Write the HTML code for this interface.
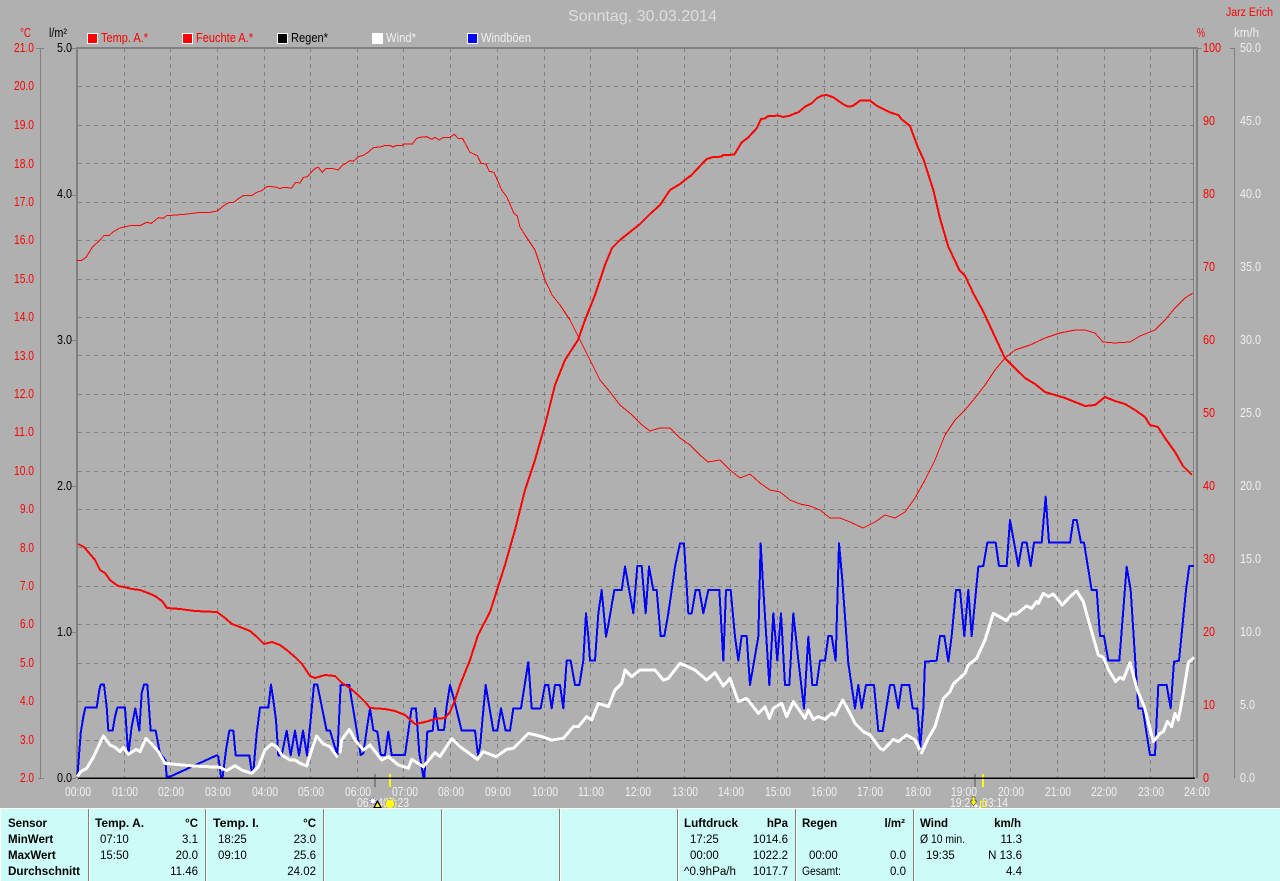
<!DOCTYPE html>
<html><head><meta charset="utf-8"><title>Sonntag, 30.03.2014</title>
<style>
html,body{margin:0;padding:0;background:#b0b0b0;width:1280px;height:881px;overflow:hidden}
svg{display:block;font-family:"Liberation Sans",sans-serif;font-size:12.5px}
.r{fill:#f00}.k{fill:#000}.w{fill:#f0f0f0}
.b{font-weight:bold;fill:#000;font-size:11.5px}.t{fill:#000;font-size:11.5px}
.e{text-anchor:end}.m{text-anchor:middle}
.l{fill:none;stroke-linejoin:round;vector-effect:non-scaling-stroke;shape-rendering:crispEdges}
.red{stroke:#f00;stroke-width:2}.hum{stroke:#f00;stroke-width:1}.blue{stroke:#00f;stroke-width:2}.white{stroke:#fff;stroke-width:3}
.g{stroke:#808080;stroke-width:1;stroke-dasharray:4 4;shape-rendering:crispEdges;fill:none}
.s{stroke:#808080;shape-rendering:crispEdges;fill:none}
</style></head><body>
<svg width="1280" height="881" viewBox="0 0 1280 881" xmlns="http://www.w3.org/2000/svg">
<rect width="1280" height="881" fill="#b0b0b0"/>
<text x="568" y="21" font-size="16" fill="#dedede" textLength="149" lengthAdjust="spacingAndGlyphs">Sonntag, 30.03.2014</text>
<text x="1226" y="16" class="r" font-size="11.5" textLength="47" lengthAdjust="spacingAndGlyphs">Jarz Erich</text>
<text x="20" y="37" class="r" textLength="11" lengthAdjust="spacingAndGlyphs">°C</text>
<text x="49" y="37" class="k" textLength="18" lengthAdjust="spacingAndGlyphs">l/m²</text>
<text x="1197" y="37" class="r" textLength="8" lengthAdjust="spacingAndGlyphs">%</text>
<text x="1234" y="37" class="w" textLength="25" lengthAdjust="spacingAndGlyphs">km/h</text>

<rect x="87.5" y="33.5" width="10" height="10" fill="#f00" stroke="#fff" shape-rendering="crispEdges"/>
<text x="101" y="42" class="r" textLength="47" lengthAdjust="spacingAndGlyphs">Temp. A.*</text>
<rect x="182.5" y="33.5" width="10" height="10" fill="#f00" stroke="#fff" shape-rendering="crispEdges"/>
<text x="196" y="42" class="r" textLength="57" lengthAdjust="spacingAndGlyphs">Feuchte A.*</text>
<rect x="277.5" y="33.5" width="10" height="10" fill="#000" stroke="#fff" shape-rendering="crispEdges"/>
<text x="291" y="42" class="k" textLength="37" lengthAdjust="spacingAndGlyphs">Regen*</text>
<rect x="372.5" y="33.5" width="10" height="10" fill="#fff" stroke="#fff" shape-rendering="crispEdges"/>
<text x="386" y="42" class="w" textLength="30" lengthAdjust="spacingAndGlyphs">Wind*</text>
<rect x="467.5" y="33.5" width="10" height="10" fill="#00f" stroke="#fff" shape-rendering="crispEdges"/>
<text x="481" y="42" class="w" textLength="50" lengthAdjust="spacingAndGlyphs">Windböen</text>

<!-- grid -->
<path class="g" d="M124.5 48V778M170.5 48V778M217.5 48V778M264.5 48V778M310.5 48V778M357.5 48V778M403.5 48V778M450.5 48V778M497.5 48V778M544.5 48V778M590.5 48V778M637.5 48V778M684.5 48V778M730.5 48V778M777.5 48V778M824.5 48V778M870.5 48V778M917.5 48V778M964.5 48V778M1010.5 48V778M1057.5 48V778M1104.5 48V778M1150.5 48V778"/>
<path class="g" d="M78 86.5H1194M78 125.5H1194M78 163.5H1194M78 202.5H1194M78 240.5H1194M78 279.5H1194M78 317.5H1194M78 355.5H1194M78 394.5H1194M78 432.5H1194M78 471.5H1194M78 509.5H1194M78 547.5H1194M78 586.5H1194M78 624.5H1194M78 663.5H1194M78 701.5H1194M78 740.5H1194"/>
<!-- axes -->
<path class="s" stroke-width="2" d="M76 48H1198M77 47V778M1197 47V778"/>
<path class="s" d="M1193.5 48V778M40.5 48V778M36 48.5H44M38 778.5H44M1234.5 48V778M1230 48.5H1235M1197 48.5H1202M71 195.5H76M71 340.5H76M71 486.5H76M71 632.5H76M71 48.5H76M71 778.5H76"/>

<!-- left labels -->
<g class="r" text-anchor="end">
<text x="34" y="52" textLength="20" lengthAdjust="spacingAndGlyphs">21.0</text>
<text x="34" y="90" textLength="20" lengthAdjust="spacingAndGlyphs">20.0</text>
<text x="34" y="129" textLength="20" lengthAdjust="spacingAndGlyphs">19.0</text>
<text x="34" y="168" textLength="20" lengthAdjust="spacingAndGlyphs">18.0</text>
<text x="34" y="206" textLength="20" lengthAdjust="spacingAndGlyphs">17.0</text>
<text x="34" y="244" textLength="20" lengthAdjust="spacingAndGlyphs">16.0</text>
<text x="34" y="283" textLength="20" lengthAdjust="spacingAndGlyphs">15.0</text>
<text x="34" y="321" textLength="20" lengthAdjust="spacingAndGlyphs">14.0</text>
<text x="34" y="360" textLength="20" lengthAdjust="spacingAndGlyphs">13.0</text>
<text x="34" y="398" textLength="20" lengthAdjust="spacingAndGlyphs">12.0</text>
<text x="34" y="436" textLength="20" lengthAdjust="spacingAndGlyphs">11.0</text>
<text x="34" y="475" textLength="20" lengthAdjust="spacingAndGlyphs">10.0</text>
<text x="34" y="513" textLength="14" lengthAdjust="spacingAndGlyphs">9.0</text>
<text x="34" y="552" textLength="14" lengthAdjust="spacingAndGlyphs">8.0</text>
<text x="34" y="590" textLength="14" lengthAdjust="spacingAndGlyphs">7.0</text>
<text x="34" y="628" textLength="14" lengthAdjust="spacingAndGlyphs">6.0</text>
<text x="34" y="667" textLength="14" lengthAdjust="spacingAndGlyphs">5.0</text>
<text x="34" y="705" textLength="14" lengthAdjust="spacingAndGlyphs">4.0</text>
<text x="34" y="744" textLength="14" lengthAdjust="spacingAndGlyphs">3.0</text>
<text x="34" y="782" textLength="14" lengthAdjust="spacingAndGlyphs">2.0</text>
</g>
<g class="k" text-anchor="end" transform="translate(0 -1)">
<text x="72" y="53" textLength="15" lengthAdjust="spacingAndGlyphs">5.0</text>
<text x="72" y="199" textLength="15" lengthAdjust="spacingAndGlyphs">4.0</text>
<text x="72" y="345" textLength="15" lengthAdjust="spacingAndGlyphs">3.0</text>
<text x="72" y="491" textLength="15" lengthAdjust="spacingAndGlyphs">2.0</text>
<text x="72" y="637" textLength="15" lengthAdjust="spacingAndGlyphs">1.0</text>
<text x="72" y="783" textLength="15" lengthAdjust="spacingAndGlyphs">0.0</text>
</g>
<!-- right labels -->
<g class="r" transform="translate(0 -1)">
<text x="1203" y="53" textLength="18" lengthAdjust="spacingAndGlyphs">100</text>
<text x="1203" y="126" textLength="12" lengthAdjust="spacingAndGlyphs">90</text>
<text x="1203" y="199" textLength="12" lengthAdjust="spacingAndGlyphs">80</text>
<text x="1203" y="272" textLength="12" lengthAdjust="spacingAndGlyphs">70</text>
<text x="1203" y="345" textLength="12" lengthAdjust="spacingAndGlyphs">60</text>
<text x="1203" y="418" textLength="12" lengthAdjust="spacingAndGlyphs">50</text>
<text x="1203" y="491" textLength="12" lengthAdjust="spacingAndGlyphs">40</text>
<text x="1203" y="564" textLength="12" lengthAdjust="spacingAndGlyphs">30</text>
<text x="1203" y="637" textLength="12" lengthAdjust="spacingAndGlyphs">20</text>
<text x="1203" y="710" textLength="12" lengthAdjust="spacingAndGlyphs">10</text>
<text x="1203" y="783" textLength="6" lengthAdjust="spacingAndGlyphs">0</text>
</g>
<g class="w" transform="translate(0 -1)">
<text x="1240" y="53" textLength="21" lengthAdjust="spacingAndGlyphs">50.0</text>
<text x="1240" y="126" textLength="21" lengthAdjust="spacingAndGlyphs">45.0</text>
<text x="1240" y="199" textLength="21" lengthAdjust="spacingAndGlyphs">40.0</text>
<text x="1240" y="272" textLength="21" lengthAdjust="spacingAndGlyphs">35.0</text>
<text x="1240" y="345" textLength="21" lengthAdjust="spacingAndGlyphs">30.0</text>
<text x="1240" y="418" textLength="21" lengthAdjust="spacingAndGlyphs">25.0</text>
<text x="1240" y="491" textLength="21" lengthAdjust="spacingAndGlyphs">20.0</text>
<text x="1240" y="564" textLength="21" lengthAdjust="spacingAndGlyphs">15.0</text>
<text x="1240" y="637" textLength="21" lengthAdjust="spacingAndGlyphs">10.0</text>
<text x="1240" y="710" textLength="15" lengthAdjust="spacingAndGlyphs">5.0</text>
<text x="1240" y="783" textLength="15" lengthAdjust="spacingAndGlyphs">0.0</text>
</g>
<!-- hour labels -->
<g class="w" transform="translate(0 -1)">
<text x="65" y="797" textLength="26" lengthAdjust="spacingAndGlyphs">00:00</text>
<text x="112" y="797" textLength="26" lengthAdjust="spacingAndGlyphs">01:00</text>
<text x="158" y="797" textLength="26" lengthAdjust="spacingAndGlyphs">02:00</text>
<text x="205" y="797" textLength="26" lengthAdjust="spacingAndGlyphs">03:00</text>
<text x="252" y="797" textLength="26" lengthAdjust="spacingAndGlyphs">04:00</text>
<text x="298" y="797" textLength="26" lengthAdjust="spacingAndGlyphs">05:00</text>
<text x="345" y="797" textLength="26" lengthAdjust="spacingAndGlyphs">06:00</text>
<text x="392" y="797" textLength="26" lengthAdjust="spacingAndGlyphs">07:00</text>
<text x="438" y="797" textLength="26" lengthAdjust="spacingAndGlyphs">08:00</text>
<text x="485" y="797" textLength="26" lengthAdjust="spacingAndGlyphs">09:00</text>
<text x="532" y="797" textLength="26" lengthAdjust="spacingAndGlyphs">10:00</text>
<text x="578" y="797" textLength="26" lengthAdjust="spacingAndGlyphs">11:00</text>
<text x="625" y="797" textLength="26" lengthAdjust="spacingAndGlyphs">12:00</text>
<text x="672" y="797" textLength="26" lengthAdjust="spacingAndGlyphs">13:00</text>
<text x="718" y="797" textLength="26" lengthAdjust="spacingAndGlyphs">14:00</text>
<text x="765" y="797" textLength="26" lengthAdjust="spacingAndGlyphs">15:00</text>
<text x="811" y="797" textLength="26" lengthAdjust="spacingAndGlyphs">16:00</text>
<text x="857" y="797" textLength="26" lengthAdjust="spacingAndGlyphs">17:00</text>
<text x="905" y="797" textLength="26" lengthAdjust="spacingAndGlyphs">18:00</text>
<text x="951" y="797" textLength="26" lengthAdjust="spacingAndGlyphs">19:00</text>
<text x="998" y="797" textLength="26" lengthAdjust="spacingAndGlyphs">20:00</text>
<text x="1045" y="797" textLength="26" lengthAdjust="spacingAndGlyphs">21:00</text>
<text x="1091" y="797" textLength="26" lengthAdjust="spacingAndGlyphs">22:00</text>
<text x="1138" y="797" textLength="26" lengthAdjust="spacingAndGlyphs">23:00</text>
<text x="1184" y="797" textLength="26" lengthAdjust="spacingAndGlyphs">24:00</text>
<text x="357" y="808" textLength="26" lengthAdjust="spacingAndGlyphs">06:34</text>
<text x="383" y="808" textLength="26" lengthAdjust="spacingAndGlyphs">07:23</text>
<text x="950" y="808" textLength="26" lengthAdjust="spacingAndGlyphs">19:27</text>
<text x="982" y="808" textLength="26" lengthAdjust="spacingAndGlyphs">03:14</text>
</g>
<!-- sun markers -->
<rect x="374" y="774" width="2" height="13" fill="#808080"/>
<rect x="389" y="774" width="2" height="13" fill="#ff0"/>
<rect x="974" y="774" width="2" height="13" fill="#808080"/>
<rect x="982" y="774" width="2" height="13" fill="#ff0"/>
<circle cx="373" cy="801" r="3" fill="#fff" stroke="#3a3a8a" stroke-width="1" stroke-dasharray="1 1"/>
<path d="M377.5 800 L382 808 H373Z" fill="#000"/><path d="M377.5 802.5 L380 807 H375Z" fill="#ff0"/>
<circle cx="390" cy="804" r="4" fill="#ff0"/><circle cx="390" cy="804" r="6" fill="none" stroke="#e8e070" stroke-width="1.5" stroke-dasharray="2 1"/>
<path d="M972 797h3v4h2l-3.5 5l-3.5-5h2z" fill="#ff0" stroke="#222" stroke-width=".5"/>
<circle cx="976" cy="806" r="1.5" fill="#fff"/><circle cx="980" cy="807" r="1" fill="#fff"/>
<rect x="980.5" y="801.5" width="5" height="5" fill="none" stroke="#ff0"/>

<!-- baseline -->
<path d="M78 778H1195" stroke="#000" stroke-width="1.5" shape-rendering="crispEdges"/>

<!-- blue -->
<g transform="translate(60 520) scale(.33333)">
<polyline class="l blue" points="52,770 56,720 62,640 70,590 76,563 110,563 118,510 122,494 132,494 140,560 145,632 158,632 165,590 172,563 195,563 203,680 206,695 215,620 226,565 238,632 245,520 252,494 262,494 272,632 287,632 300,700 316,720 320,770 330,770 470,706 475,710 483,770 488,770 498,690 508,632 520,632 527,706 568,706 575,755 580,755 590,640 600,563 625,563 633,494 640,540 648,600 655,706 665,706 680,632 692,706 705,632 717,706 729,632 741,706 752,600 762,494 772,494 800,632 810,632 832,706 842,494"/>
</g>
<g transform="translate(340 640) scale(.33333)">
<polyline class="l blue" points="3,135 28,135 35,180 50,270 62,345 70,340 80,270 90,205 100,270 112,275 122,345 135,345 145,275 155,345 195,345 205,275 215,205 228,205 238,340 250,410 253,410 262,275 278,272 285,205 295,270 312,270 320,200 330,135 340,170 365,272 405,272 414,345 420,320 437,135 460,272 472,272 483,205 497,272 510,272 520,205 543,205 565,65"/>
</g>
<g transform="translate(520 530) scale(.33333)">
<polyline class="l blue" points="25,395 35,535 62,535 75,465 85,465 95,535 105,465 120,465 130,535 140,392 152,392 165,465 178,465 190,392 198,250 205,320 210,392 225,392 235,250 245,180 258,320 265,285 283,180 305,180 315,110 340,250 352,108 365,108 377,250 387,110 400,180 410,180 422,318 433,318 445,250 465,110 480,40 492,40 505,250 515,250 527,180 538,180 550,250 565,180 598,180 610,392 618,180 632,180 645,320 655,392 665,318 680,318 690,465 715,320 722,40 730,180 748,465 760,250 772,392 783,250 795,465 808,465 820,250 835,390 852,535 865,320 877,465 890,465 900,392 915,392 925,318 935,318 947,392 957,40 967,150 985,400 1005,535 1015,465 1025,535 1038,465 1062,465 1075,603 1088,603 1110,465 1122,465 1135,535 1145,465 1168,465 1178,535 1192,535 1200,640"/>
</g>
<g transform="translate(900 480) scale(.33333)">
<polyline class="l blue" points="60,810 70,685 75,545 110,542 120,468 133,468 145,545 155,468 168,330 180,330 193,468 205,330 215,468 235,260 250,258 262,188 287,188 297,258 320,258 330,120 355,258 367,188 380,188 392,258 402,188 425,188 437,50 447,188 510,188 520,120 530,120 543,188 552,188 575,330 590,330 600,468 612,468 625,542 658,542 680,260 692,330 715,685 728,685 750,825 765,825 775,615 800,615 812,685 822,545 837,542 858,330 868,258 882,258"/>
</g>

<!-- white -->
<g transform="translate(60 520) scale(.33333)">
<polyline class="l white" points="52,770 62,755 80,745 100,712 115,680 130,648 150,675 165,682 180,695 190,682 205,703 218,695 228,688 240,695 258,655 275,672 295,695 315,730 400,738 480,742 500,752 525,737 545,750 575,760 595,740 615,690 635,672 650,680 665,705 690,720 705,720 720,730 740,738 755,690 770,648 790,672 810,680 833,712"/>
</g>
<g transform="translate(340 640) scale(.33333)">
<polyline class="l white" points="0,340 5,300 28,268 45,300 70,330 90,315 125,360 145,350 175,375 205,385 215,358 250,380 285,338 300,350 335,296 360,320 412,358 430,335 468,350 500,328 520,325 565,280 600,288"/>
</g>
<g transform="translate(520 530) scale(.33333)">
<polyline class="l white" points="60,618 95,630 130,625 160,590 175,590 200,560 215,570 235,520 265,530 285,480 305,460 315,420 335,440 360,420 405,420 430,450 445,445 480,400 525,420 560,450 585,428 610,468 630,445 655,515 680,505 715,550 735,530 748,565 760,535 785,520 800,560 820,515 855,565 865,540 880,568 895,560 915,568 935,550 945,555 968,510 990,550 1005,580 1030,605 1050,615 1080,655 1090,660 1120,628 1135,635 1160,615 1185,630 1200,660"/>
</g>
<g transform="translate(900 480) scale(.33333)">
<polyline class="l white" points="63,822 85,775 105,740 130,655 150,635 160,612 195,580 205,555 230,535 255,480 280,400 320,422 335,402 350,402 380,378 395,385 410,365 415,370 430,340 445,350 460,342 487,375 510,350 530,333 550,365 565,420 595,525 610,532 625,568 647,605 660,592 670,598 690,548 712,630 733,680 760,785 780,760 790,755 802,725 815,740 825,700 835,720 850,640 865,548 882,532"/>
</g>

<!-- humidity -->
<g transform="translate(70 90) scale(.33333)">
<polyline class="l hum" points="20,511 35,511 48,502 68,470 85,455 102,437 118,436 130,425 150,414 180,407 212,406 230,397 245,400 265,383 280,385 290,377 345,373 385,368 420,367 442,363 460,348 475,338 490,338 505,326 520,317 545,317 560,307 575,302 592,289 618,291 630,296 640,292 665,294 677,277 690,279 700,262 712,260 735,235 745,232 757,247 768,235 785,235 805,240 815,228 840,212 850,214 865,200 880,196 895,186 910,173 935,170 945,166 960,166 970,171 980,166 997,166 1000,162 1027,162 1040,145 1050,142 1070,140 1085,148 1095,142 1108,150 1120,142 1140,142 1153,133 1165,146 1178,146 1200,187 1222,197 1233,220 1248,222 1258,244 1272,247 1295,300 1310,320 1332,370 1342,378 1350,412"/>
</g>
<polyline class="l hum" points="520,227 525,235 535,250 545,280 552,295 560,305 570,320 580,340 590,360 600,380 610,392 620,405 632,415 642,425 650,431 660,428 670,428 680,438 690,445 700,455 708,462 720,460 730,470 740,478 750,474 760,483 770,490 780,492 790,500 800,504 810,506 820,510 830,518 840,518 850,522 863,528 875,522 885,515 895,518 905,512 915,498 925,480 935,460 945,435 955,420 965,410 975,398 985,385 995,370 1005,358 1015,350 1030,345 1045,338 1060,333 1075,330 1085,330 1095,333 1103,342 1115,343 1130,342 1140,336 1155,330 1165,320 1175,308 1185,298 1193,293"/>

<!-- temperature -->
<polyline class="l red" points="78,544 84,547 90,554 95,560 100,570 105,573 110,580 118,586 124,587 132,589 140,590 148,593 155,596 162,601 167,608 180,609 195,611 217,612 225,618 232,624 240,627 250,631 257,637 264,644 272,642 280,645 288,651 295,657 302,664 310,676 315,678 325,675 335,676 342,683 350,688 358,695 366,703 370,708 385,709 395,711 405,715 415,724 425,722 435,719 445,718 450,712 455,700 460,685 470,660 478,635 490,612 497,590 505,565 515,530 525,490 535,460 545,425 555,385 565,360 578,340 585,320 595,295 605,265 612,248 620,240 630,232 640,224 650,214 660,205 670,190 680,184 690,176"/>
<g transform="translate(690 85) scale(.33333)">
<polyline class="l red" points="0,275 50,222 70,216 95,215 100,210 133,209 155,172 175,157 200,130 213,102 225,100 235,93 265,92 280,96 300,92 315,85 325,82 345,65 365,55 380,40 395,32 410,30 430,37 460,58 475,65 488,63 510,47 540,47 560,62 600,82 625,90 635,103 660,123 670,150 685,190 700,222 730,315 750,400 775,485 808,555 825,572 850,625 880,680 945,820 990,865"/>
</g>
<polyline class="l red" points="1020,373 1025,378 1035,384 1045,392 1055,395 1065,398 1075,402 1085,406 1095,405 1105,397 1115,401 1125,404 1135,410 1145,417 1150,425 1158,427 1165,438 1175,452 1183,466 1192,475"/>

<!-- panel -->
<rect x="0" y="808" width="1280" height="73" fill="#ccfbf8"/>
<rect x="0" y="808" width="1280" height="1" fill="#fff"/>
<rect x="0" y="808" width="1" height="73" fill="#fff"/>
<path stroke="#808080" fill="none" shape-rendering="crispEdges" d="M88.5 809V881M205.5 809V881M323.5 809V881M441.5 809V881M559.5 809V881M677.5 809V881M795.5 809V881M913.5 809V881"/>
<path stroke="#fff" fill="none" shape-rendering="crispEdges" d="M89.5 809V881M206.5 809V881M324.5 809V881M442.5 809V881M560.5 809V881M678.5 809V881M796.5 809V881M914.5 809V881"/>

<text x="8" y="827" class="b">Sensor</text>
<text x="8" y="843" class="b">MinWert</text>
<text x="8" y="859" class="b">MaxWert</text>
<text x="8" y="875" class="b" textLength="72" lengthAdjust="spacingAndGlyphs">Durchschnitt</text>

<text x="95" y="827" class="b" textLength="49" lengthAdjust="spacingAndGlyphs">Temp. A.</text>
<text x="198" y="827" class="b e">°C</text>
<text x="100" y="843" class="t">07:10</text><text x="198" y="843" class="t e">3.1</text>
<text x="100" y="859" class="t">15:50</text><text x="198" y="859" class="t e">20.0</text>
<text x="198" y="875" class="t e">11.46</text>

<text x="213" y="827" class="b" textLength="46" lengthAdjust="spacingAndGlyphs">Temp. I.</text>
<text x="316" y="827" class="b e">°C</text>
<text x="218" y="843" class="t">18:25</text><text x="316" y="843" class="t e">23.0</text>
<text x="218" y="859" class="t">09:10</text><text x="316" y="859" class="t e">25.6</text>
<text x="316" y="875" class="t e">24.02</text>

<text x="684" y="827" class="b" textLength="54" lengthAdjust="spacingAndGlyphs">Luftdruck</text>
<text x="788" y="827" class="b e">hPa</text>
<text x="690" y="843" class="t">17:25</text><text x="788" y="843" class="t e">1014.6</text>
<text x="690" y="859" class="t">00:00</text><text x="788" y="859" class="t e">1022.2</text>
<text x="684" y="875" class="t" textLength="52" lengthAdjust="spacingAndGlyphs">^0.9hPa/h</text><text x="788" y="875" class="t e">1017.7</text>

<text x="802" y="827" class="b">Regen</text>
<text x="905" y="827" class="b e">l/m²</text>
<text x="809" y="859" class="t">00:00</text><text x="906" y="859" class="t e">0.0</text>
<text x="802" y="875" class="t" textLength="39" lengthAdjust="spacingAndGlyphs">Gesamt:</text><text x="906" y="875" class="t e">0.0</text>

<text x="920" y="827" class="b">Wind</text>
<text x="1021" y="827" class="b e">km/h</text>
<text x="920" y="843" class="t" textLength="45" lengthAdjust="spacingAndGlyphs">Ø 10 min.</text><text x="1022" y="843" class="t e">11.3</text>
<text x="926" y="859" class="t">19:35</text><text x="1022" y="859" class="t e">N 13.6</text>
<text x="1022" y="875" class="t e">4.4</text>
</svg>
</body></html>
